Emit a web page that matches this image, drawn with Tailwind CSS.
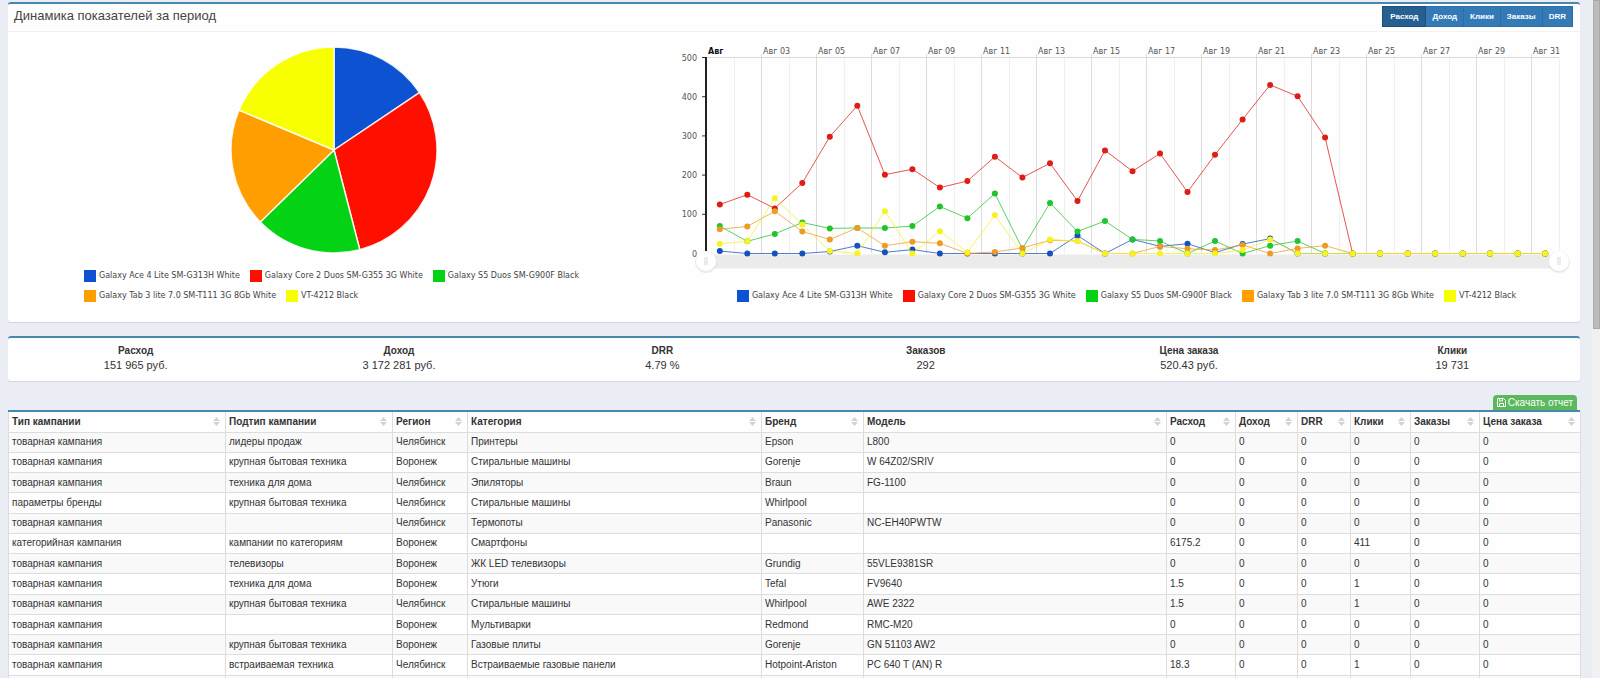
<!DOCTYPE html>
<html lang="ru">
<head>
<meta charset="utf-8">
<title>Динамика показателей за период</title>
<script src="https://cdn.jsdelivr.net/npm/@tailwindcss/browser@4"></script>
</head>
<body class="bg-[#eaeef4] font-['Liberation_Sans',Arial,sans-serif] text-[#333]">
<div class="flex h-screen overflow-hidden">
  <main class="min-w-0 flex-1 pt-0.5 pr-3 pl-2">

    <section class="rounded-[3px] border-t-2 border-[#4688ae] bg-[#fefefe] shadow-[0_1px_1px_rgba(0,0,0,0.1)]">
      <header class="flex h-7 items-start justify-between border-b border-[#f2f2f2] pt-0.5 pr-[7px] pl-1.5">
        <h1 class="pt-0.5 text-[13px] leading-4 text-[#444]">Динамика показателей за период</h1>
        <div class="flex text-[8px] leading-[19px] font-bold text-white">
          <button type="button" aria-pressed="true" class="border border-[#204d74] bg-[#265f92] px-[7px]">Расход</button>
          <button type="button" class="border-y border-r border-[#2e6da4] bg-[#337ab7] px-1.5">Доход</button>
          <button type="button" class="border-y border-r border-[#2e6da4] bg-[#337ab7] px-1.5">Клики</button>
          <button type="button" class="border-y border-r border-[#2e6da4] bg-[#337ab7] px-1.5">Заказы</button>
          <button type="button" class="border-y border-r border-[#2e6da4] bg-[#337ab7] px-1.5">DRR</button>
        </div>
      </header>
      <div class="grid grid-cols-12 pb-5 font-['DejaVu_Sans',Verdana,sans-serif] text-[8px] leading-3 text-[#444]">
        <div class="col-span-5 pr-1">
          <svg id="pie" class="mx-auto mt-[13px]" width="210" height="210" viewBox="-105 -105 210 210" role="img" aria-label="Доли по моделям"></svg>
          <ul class="mt-[15px] ml-[76px] flex flex-wrap gap-x-2.5 gap-y-2">
            <li class="flex items-center gap-[3px]"><span class="size-3 bg-[#0d52d1]"></span>Galaxy Ace 4 Lite SM-G313H White</li>
            <li class="flex items-center gap-[3px]"><span class="size-3 bg-[#ff0f00]"></span>Galaxy Core 2 Duos SM-G355 3G White</li>
            <li class="flex items-center gap-[3px]"><span class="size-3 bg-[#04d215]"></span>Galaxy S5 Duos SM-G900F Black</li>
            <li class="flex items-center gap-[3px]"><span class="size-3 bg-[#ff9e01]"></span>Galaxy Tab 3 lite 7.0 SM-T111 3G 8Gb White</li>
            <li class="flex items-center gap-[3px]"><span class="size-3 bg-[#f8ff01]"></span>VT-4212 Black</li>
          </ul>
        </div>
        <div class="col-span-7">
          <svg id="line" class="block w-full" viewBox="0 0 917 242" role="img" aria-label="Расход по дням"></svg>
          <ul class="mt-4 flex flex-wrap justify-center gap-x-2.5 pl-2.5">
            <li class="flex items-center gap-[3px]"><span class="size-3 bg-[#0d52d1]"></span>Galaxy Ace 4 Lite SM-G313H White</li>
            <li class="flex items-center gap-[3px]"><span class="size-3 bg-[#ff0f00]"></span>Galaxy Core 2 Duos SM-G355 3G White</li>
            <li class="flex items-center gap-[3px]"><span class="size-3 bg-[#04d215]"></span>Galaxy S5 Duos SM-G900F Black</li>
            <li class="flex items-center gap-[3px]"><span class="size-3 bg-[#ff9e01]"></span>Galaxy Tab 3 lite 7.0 SM-T111 3G 8Gb White</li>
            <li class="flex items-center gap-[3px]"><span class="size-3 bg-[#f8ff01]"></span>VT-4212 Black</li>
          </ul>
        </div>
      </div>
    </section>

    <section class="mt-[14px] rounded-[3px] border-t-2 border-[#4688ae] bg-[#fefefe] pt-1.5 pb-[9px] shadow-[0_1px_1px_rgba(0,0,0,0.1)]">
      <dl class="-mx-1 grid grid-cols-6 text-center text-[11px] leading-[14px]">
        <div><dt class="text-[10px] font-bold">Расход</dt><dd>151 965 руб.</dd></div>
        <div><dt class="text-[10px] font-bold">Доход</dt><dd>3 172 281 руб.</dd></div>
        <div><dt class="text-[10px] font-bold">DRR</dt><dd>4.79 %</dd></div>
        <div><dt class="text-[10px] font-bold">Заказов</dt><dd>292</dd></div>
        <div><dt class="text-[10px] font-bold">Цена заказа</dt><dd>520.43 руб.</dd></div>
        <div><dt class="text-[10px] font-bold">Клики</dt><dd>19 731</dd></div>
      </dl>
    </section>

    <div class="mt-[14px] flex justify-end pr-[3px]">
      <button type="button" class="flex h-[15px] items-center gap-0.5 rounded-t-sm bg-[#5cb85c] px-1 text-[10px] leading-[14px] text-white">
        <svg width="9" height="9" viewBox="0 0 9 9" fill="none" stroke="#fff" aria-hidden="true"><path d="M.5.5h6l2 2v6h-8z"/><path d="M2.500.5v2.500h3v-2.500M2.500 8.500v-3h4v3"/></svg>Скачать отчет</button>
    </div>

    <section class="border-t-2 border-[#4688ae] bg-[#fefefe]">
      <table class="h-[284px] w-full table-fixed border-collapse text-left text-[10px] leading-3">
        <colgroup>
          <col class="w-[217px]"><col class="w-[167px]"><col class="w-[75px]"><col class="w-[294px]"><col class="w-[102px]"><col class="w-[303px]"><col class="w-[69px]"><col class="w-[62px]"><col class="w-[53px]"><col class="w-[60px]"><col class="w-[69px]"><col class="w-[101px]">
        </colgroup>
        <thead><tr id="head" class="h-5"></tr></thead>
        <tbody id="rows"></tbody>
      </table>
    </section>
  </main>
  <div class="w-2 bg-[#f1f1f1] pl-px" aria-hidden="true"><div class="h-[329px] border border-[#a8a8a8] bg-[#bcbcbc]"></div></div>
</div>

<script>
// Table
const heads = ['Тип кампании','Подтип кампании','Регион','Категория','Бренд','Модель','Расход','Доход','DRR','Клики','Заказы','Цена заказа'];
document.getElementById('head').innerHTML = heads.map(h =>
  `<th scope="col" class="border border-t-0 border-[#ddd] px-[3px] py-0 font-bold"><button type="button" class="flex w-full items-center justify-between pr-0.5 text-left"><span class="whitespace-nowrap">${h}</span><svg width="7" height="9" viewBox="0 0 7 9" fill="#d2d2d2" aria-hidden="true"><path d="M3.500 0L7 4H0zM0 5h7L3.500 9z"/></svg></button></th>`).join('');
const T = 'товарная кампания', K = 'крупная бытовая техника', C = 'Челябинск', V = 'Воронеж';
const rows = [
  [T,'лидеры продаж',C,'Принтеры','Epson','L800'],
  [T,K,V,'Стиральные машины','Gorenje','W 64Z02/SRIV'],
  [T,'техника для дома',C,'Эпиляторы','Braun','FG-1100'],
  ['параметры бренды',K,C,'Стиральные машины','Whirlpool',''],
  [T,'',C,'Термопоты','Panasonic','NC-EH40PWTW'],
  ['категорийная кампания','кампании по категориям',V,'Смартфоны','','','6175.2','411'],
  [T,'телевизоры',V,'ЖК LED телевизоры','Grundig','55VLE9381SR'],
  [T,'техника для дома',V,'Утюги','Tefal','FV9640','1.5','1'],
  [T,K,C,'Стиральные машины','Whirlpool','AWE 2322','1.5','1'],
  [T,'',V,'Мультиварки','Redmond','RMC-M20'],
  [T,K,V,'Газовые плиты','Gorenje','GN 51103 AW2'],
  [T,'встраиваемая техника',C,'Встраиваемые газовые панели','Hotpoint-Ariston','PC 640 T (AN) R','18.3','1']
].map(r => [...r.slice(0, 6), r[6] || '0', '0', '0', r[7] || '0', '0', '0']);
rows.push(Array(12).fill(''));
document.getElementById('rows').innerHTML = rows.map(r =>
  `<tr class="h-5 odd:bg-[#f9f9f9]">${r.map(c => `<td class="truncate border border-[#ddd] px-[3px] py-0">${c}</td>`).join('')}</tr>`).join('');

// Pie
const cuts = [0, 56.1, 165.5, 225.7, 292.8, 360], fills = ['#0d52d1','#ff0f00','#04d215','#ff9e01','#f8ff01'];
const pt = a => [103 * Math.sin(a * Math.PI / 180), -103 * Math.cos(a * Math.PI / 180)].map(n => n.toFixed(2)).join(' ');
document.getElementById('pie').innerHTML = fills.map((f, i) =>
  `<path d="M0 0L${pt(cuts[i])}A103 103 0 0 1 ${pt(cuts[i + 1])}Z" fill="${f}" stroke="#fff" stroke-opacity=".85" stroke-width="1.5"/>`).join('');

// Line chart
const L = 43, R = 896, TOP = 25.5, BOT = 221.5, step = (R - L) / 31;
let s = '';
for (let d = 1; d <= 31; d++) {
  const x = Math.round(L + d * step) + .5, major = d % 2 === 0 && d < 31;
  s += `<path d="M${x} ${major ? 22 : TOP}V${BOT}" stroke="${major ? '#dcdcdc' : '#f0f0f0'}"/>`;
}
s += `<path d="M${L} ${TOP}H${R}" stroke="#dadada"/>`;
s += `<rect x="${L}" y="222.500" width="${R - L}" height="14" fill="#ebebeb"/>`;
for (let d = 1; d <= 31; d += 2)
  s += `<text x="${Math.round(L + (d - 1) * step) + 2}" y="22" ${d === 1 ? 'font-weight="bold" fill="#111"' : 'fill="#555"'}>Авг${d === 1 ? '' : ' ' + String(d).padStart(2, '0')}</text>`;
for (let v = 0; v <= 500; v += 100) {
  const y = BOT - v * .392;
  s += `<path d="M39 ${y}H43" stroke="#333"/><text x="34" y="${y + 3}" text-anchor="end" fill="#555">${v}</text>`;
}
s += `<path d="M${L} ${TOP - .5}V${BOT}" stroke="#222" stroke-width="2"/>`;
const series = [
  ['#1850bb', [6,0,0,0,5,20,3,10,0,0,0,0,0,46,0,36,18,25,2,24,38]],
  ['#dc1e14', [125,150,115,180,298,377,201,215,168,185,247,194,230,134,263,210,255,157,252,342,430,401,296]],
  ['#20c42c', [70,31,50,79,64,65,65,70,120,90,153,12,129,56,83,36,32,0,32,0,20,32]],
  ['#ec9c22', [62,69,108,56,36,65,20,30,26,0,4,14,34,32,0,0,18,12,9,22,0,13,20]],
  ['#f6f226', [25,31,141,74,6,0,108,0,57,3,98,0,36,31,0,0,0,0,0,9,36]]
];
for (const [c, vals] of series) {
  const p = Array.from({length: 31}, (_, i) => [(L + (i + .5) * step).toFixed(1), (BOT - (vals[i] || 0) * .392).toFixed(1)]);
  s += `<polyline points="${p.join(' ')}" fill="none" stroke="${c}" stroke-opacity=".75"/>` + p.map(q => `<circle cx="${q[0]}" cy="${q[1]}" r="3" fill="${c}"/>`).join('');
}
for (const x of [L, R])
  s += `<circle cx="${x}" cy="230" r="11" fill="#e2e2e2" opacity=".7"/><circle cx="${x}" cy="229" r="10" fill="#fff"/><path d="M${x - 1} 225v8M${x + 1} 225v8" stroke="#d8d8d8"/>`;
document.getElementById('line').innerHTML = s;
</script>
</body>
</html>
